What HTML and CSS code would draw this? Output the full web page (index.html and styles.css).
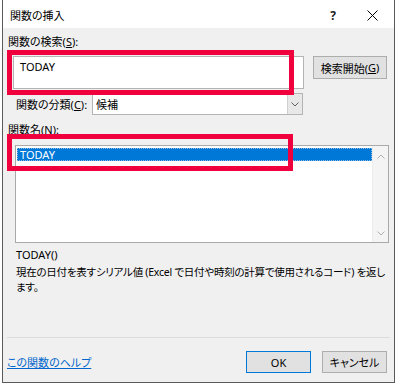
FILE: index.html
```html
<!DOCTYPE html>
<html lang="ja">
<head>
<meta charset="utf-8">
<title>関数の挿入</title>
<link rel="stylesheet" href="styles.css">
</head>
<body>
<div class="dialog">
  <div class="titlebar">
    <span class="title">関数の挿入</span>
    <span class="help">?</span>
    <span class="close"><svg width="11" height="11" viewBox="0 0 11 11"><path d="M0.5 0.5 L10.5 10.5 M10.5 0.5 L0.5 10.5" stroke="#000" stroke-width="1" fill="none"/></svg></span>
  </div>
  <div class="body">
    <div class="label l1">関数の検索(<u>S</u>):</div>
    <div class="search-row">
      <div class="textbox">TODAY</div>
      <div class="btn btn-search">検索開始(<u>G</u>)</div>
    </div>
    <div class="cat-row">
      <span class="cat-label">関数の分類(<u>C</u>):</span>
      <div class="select">
        <span class="select-val">候補</span>
        <span class="select-arrow"><svg width="8" height="5" viewBox="0 0 8 5"><path d="M0.5 0.5 L4 4 L7.5 0.5" stroke="#606060" stroke-width="1" fill="none"/></svg></span>
      </div>
    </div>
    <div class="label l2">関数名(<u>N</u>):</div>
    <div class="listbox">
      <div class="list-items"><div class="item selected">TODAY</div></div>
      <div class="scrollbar">
        <svg width="8" height="5" viewBox="0 0 8 5"><path d="M0.5 4.5 L4 1 L7.5 4.5" stroke="#b0b0b0" stroke-width="1" fill="none"/></svg>
        <svg width="8" height="5" viewBox="0 0 8 5"><path d="M0.5 0.5 L4 4 L7.5 0.5" stroke="#b0b0b0" stroke-width="1" fill="none"/></svg>
      </div>
    </div>
    <div class="signature">TODAY()</div>
    <div class="desc">現在の日付を表すシリアル値 (Excel で日付や時刻の計算で使用されるコード) を返し<br>ます。</div>
  </div>
  <div class="separator"></div>
  <div class="footer">
    <a class="help-link">この関数のヘルプ</a>
    <div class="btn btn-ok">OK</div>
    <div class="btn btn-cancel">キャンセル</div>
  </div>
  <div class="mark mark-search"></div>
  <div class="mark mark-list"></div>
</div>
</body>
</html>
```
FILE: styles.css
```css
* { box-sizing: border-box; }
html, body { margin: 0; padding: 0; background: #ffffff; }
body {
  font-family: "Noto Sans", "Noto Sans CJK JP", sans-serif;
  font-size: 11px;
  color: #000;
  font-feature-settings: "palt";
}
u { text-decoration: underline; text-underline-offset: 1px; }

.dialog {
  position: relative;
  margin-left: 2px;
  width: 393px;
  height: 383px;
  border: 1px solid #5a5a5a;
  border-top: none;
  background: #f0f0f0;
  display: flex;
  flex-direction: column;
}

.titlebar {
  height: 28px;
  background: #fff;
  display: flex;
  align-items: center;
  padding: 2px 16px 0 7px;
}
.title { font-size: 11px; }
.help { margin-left: auto; font-size: 12px; font-weight: bold; color: #222; margin-right: 31px; }
.close { display: flex; }

.body { padding: 7px 0 0 5px; }
.label { height: 14px; line-height: 14px; white-space: nowrap; }

.search-row { margin-top: 7px; display: flex; align-items: flex-start; }
.textbox {
  margin-left: 5px;
  width: 291px;
  height: 33px;
  background: #fff;
  border: 1px solid #b4b4b4;
  padding: 3px 0 0 6px;
  line-height: 14px;
}
.btn {
  background: #e1e1e1;
  border: 1px solid #adadad;
  display: flex;
  align-items: center;
  justify-content: center;
  white-space: nowrap;
}
.btn-search { margin-left: 9px; width: 74px; height: 23px; }

.cat-row { margin-top: 4px; height: 22px; display: flex; align-items: center; }
.cat-label { margin-left: 8px; width: 76px; white-space: nowrap; }
.select {
  width: 211px;
  height: 22px;
  background: #fff;
  border: 1px solid #b4b4b4;
  display: flex;
  align-items: center;
}
.select-val { flex: 1; padding-left: 3px; }
.select-arrow {
  width: 15px;
  height: 20px;
  background: #e8e8e8;
  border-left: 1px solid #cfcfcf;
  display: flex;
  align-items: center;
  justify-content: center;
}

.l2 { margin-top: 8px; }

.listbox {
  margin-top: 8px;
  margin-left: 7px;
  width: 374px;
  height: 98px;
  background: #fff;
  border: 1px solid #a9a9a9;
  display: flex;
}
.list-items { flex: 1; padding: 2px 0 0 1px; }
.item { height: 13px; line-height: 12px; padding-left: 3px; }
.item.selected {
  background: #0078d7;
  color: #fff;
  border: 1px dotted #8fb8e0;
  padding-left: 2px;
}
.scrollbar {
  width: 16px;
  background: #f4f4f4;
  border-left: 1px solid #ececec;
  display: flex;
  flex-direction: column;
  justify-content: space-between;
  align-items: center;
  padding: 8px 0 6px;
}

.signature { margin-top: 5px; padding-left: 8px; height: 14px; line-height: 14px; }
.desc {
  margin-top: 3px;
  padding-left: 8px;
  line-height: 15px;
  white-space: nowrap;
  font-size: 10.5px;
  letter-spacing: -0.25px;
}

.separator {
  margin: auto 4px 0 4px;
  height: 1px;
  background: #dcdcdc;
}
.footer {
  height: 44px;
  display: flex;
  align-items: center;
  padding: 4px 7px 0 4px;
}
.help-link { color: #0066cc; text-decoration: underline; margin-right: auto; white-space: nowrap; }
.btn-ok { width: 65px; height: 22px; border-color: #0078d7; }
.btn-cancel { width: 65px; height: 22px; margin-left: 11px; }

.mark {
  position: absolute;
  border: 5px solid #f0003c;
  pointer-events: none;
}
.mark-search { left: 4px; top: 50px; width: 287px; height: 45px; }
.mark-list { left: 4px; top: 134px; width: 286px; height: 37px; }
```
